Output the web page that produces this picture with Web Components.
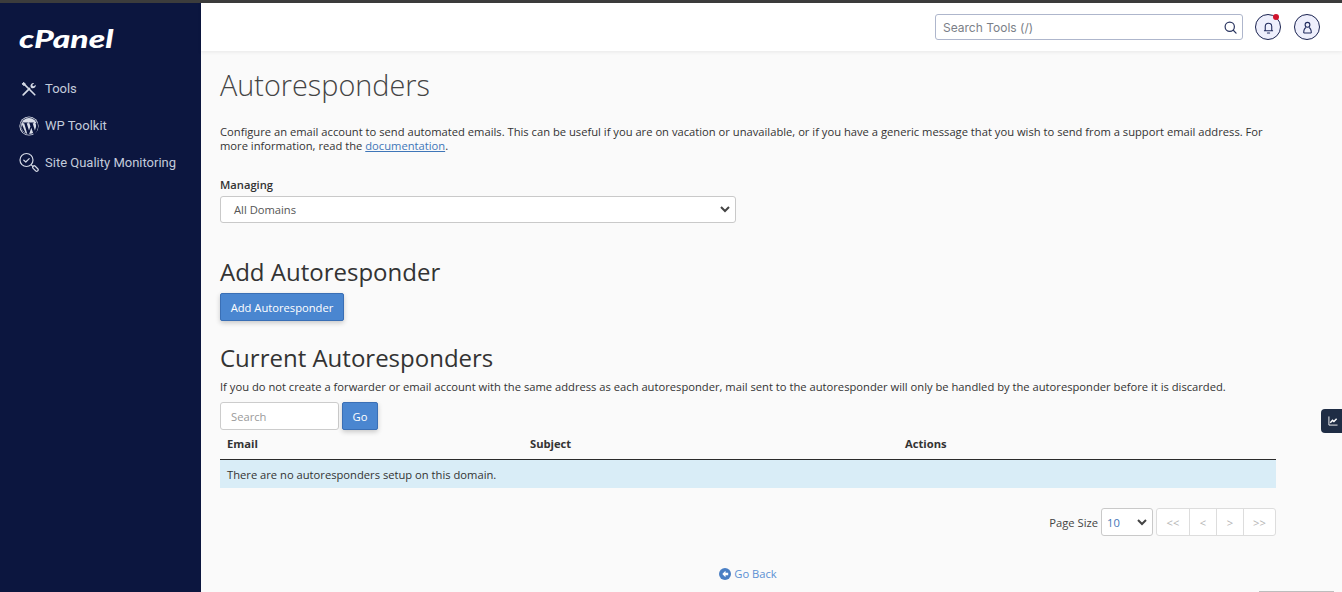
<!DOCTYPE html>
<html>
<head>
<meta charset="utf-8">
<title>Autoresponders</title>
<style>
html, body { margin: 0; height: 100%; overflow: hidden; }
body { background: #fafafa; font-family: "Open Sans", sans-serif; }
</style>
</head>
<body>
<cp-app></cp-app>
<script>
class CpNavItem extends HTMLElement {
    constructor() {
        super();
        this.attachShadow({ mode: "open" }).innerHTML = `
<style>
:host { display: flex; align-items: center; height: 37px; color: #c3cbdb; font: 13px Roboto, sans-serif; }
#icon { display: flex; justify-content: center; width: 20px; margin-right: 6px; }
</style>
<span id="icon"><slot name="icon"></slot></span><slot></slot>`;
    }
}
customElements.define("cp-nav-item", CpNavItem);

class CpSidebar extends HTMLElement {
    constructor() {
        super();
        this.attachShadow({ mode: "open" }).innerHTML = `
<style>
:host { display: block; flex: none; width: 201px; background: #0c163f; box-sizing: border-box; padding: 0 0 0 19px; }
#logo { height: 67px; padding-top: 19px; box-sizing: border-box; color: #fff; font: italic 900 24px/33px Lato, sans-serif; transform: scaleX(1.4); transform-origin: 0 0; }
nav { display: flex; flex-direction: column; }
</style>
<div id="logo">cPanel</div>
<nav>
<cp-nav-item>
<svg slot="icon" width="16" height="16" viewBox="0 0 18 18" fill="none" stroke="#d5dae6" stroke-linecap="round" stroke-linejoin="round"><path d="M3.500 3.500 15.500 15.500" stroke-width="1.800"/><path d="M1.500 3 3 1.500 5 3.500 3.500 5z" fill="#d5dae6"/><path d="M2.500 15.500 9.500 8.500" stroke-width="2"/><path d="M11 7c-.6-1.500-.3-2.800.5-3.700.9-.9 2-1.200 3.200-.9l-1.900 1.900.3 1.400 1.400.3L16.400 4.100c.3 1.200 0 2.400-.9 3.200-.9.900-2.300 1.100-3.700.5z" fill="#d5dae6" stroke="none"/></svg>
Tools</cp-nav-item>
<cp-nav-item>
<svg slot="icon" width="20" height="20" viewBox="0 0 20 20"><circle cx="10" cy="10" r="9.600" fill="#d9dde8"/><circle cx="10" cy="10" r="8.700" fill="#0c163f"/><circle cx="10" cy="10" r="8" fill="#d9dde8"/><path d="M3.500 6.500h5.400v.8H7.700L10 14.600l1.400-4.200-.9-3.100h-.9v-.8h5.200v.8h-1.100l2.200 7.100 1-3.200c.4-1.600.2-3-.6-4.200l1.800.2 1 3.200-1 4.500-2.200 3.100h-1.400l-2.200-6.300-2.100 6.300H8.300L5.200 7.300H3.900z" fill="#0c163f"/><path d="M3 8.600 6.600 17 4 15 2.400 11.500z" fill="#0c163f"/></svg>
WP Toolkit</cp-nav-item>
<cp-nav-item>
<svg slot="icon" width="20" height="21" viewBox="0 0 20 21" fill="none" stroke="#d5dae6" stroke-width="1.200" stroke-linecap="round" stroke-linejoin="round"><circle cx="7.500" cy="8" r="6.500"/><path d="M4.800 8.200l2 1.800 3.400-3.400"/><path d="M12.300 12.800l1.500 1.500"/><rect x="13.200" y="15" width="6.500" height="3" rx="1.500" transform="rotate(45 16.400 16.500)"/></svg>
Site Quality Monitoring</cp-nav-item>
</nav>`;
    }
}
customElements.define("cp-sidebar", CpSidebar);

class CpTopbar extends HTMLElement {
    constructor() {
        super();
        this.attachShadow({ mode: "open" }).innerHTML = `
<style>
:host { display: flex; flex: none; align-items: center; justify-content: flex-end; height: 48px; background: #fff; box-shadow: 0 1px 4px rgba(0,0,0,.08); padding-right: 22px; position: relative; }
#search { display: flex; align-items: center; justify-content: space-between; box-sizing: border-box; width: 308px; height: 26px; background: #fff; border: 1px solid #aeb6cc; border-radius: 3px; padding: 0 5px 0 7px; color: #7b7f88; font: 12px Inter, sans-serif; margin-right: 12px; }
.round { box-sizing: border-box; width: 26px; height: 26px; border: 1px solid #1a2350; border-radius: 50%; background: #eeeffc; display: flex; align-items: center; justify-content: center; position: relative; }
#bell { margin-right: 13px; }
#dot { position: absolute; top: -1px; right: 1px; width: 6px; height: 6px; border-radius: 50%; background: #d0142c; }
</style>
<div id="search">Search Tools (/)
<svg width="13" height="13" viewBox="0 0 14 14" fill="none" stroke="#2a3560" stroke-width="1.300" stroke-linecap="round"><circle cx="6.200" cy="6.200" r="5"/><path d="M10 10l3 3"/></svg></div>
<div class="round" id="bell">
<svg width="13" height="13" viewBox="0 0 12 12" fill="none" stroke="#1f2a5c" stroke-width="1"><path d="M3 8.500V5a3 3 0 0 1 6 0v3.500M1.800 9h8.400"/><path d="M5 11h2" stroke-linecap="round"/></svg>
<span id="dot"></span></div>
<div class="round">
<svg width="13" height="13" viewBox="0 0 12 12" fill="none" stroke="#1f2a5c" stroke-width="1"><circle cx="6" cy="3.500" r="2.200"/><path d="M2.500 11c0-2.500 1-4.500 2.200-5M9.500 11c0-2.500-1-4.500-2.200-5M2.500 11h7"/></svg></div>`;
    }
}
customElements.define("cp-topbar", CpTopbar);

class CpButton extends HTMLElement {
    constructor() {
        super();
        this.attachShadow({ mode: "open" }).innerHTML = `
<style>
:host { display: inline-flex; align-items: center; justify-content: center; box-sizing: border-box; background: #4a86d0; border: 1px solid #3a6fb5; border-radius: 2px; color: #fff; font: 11.200px "Open Sans", sans-serif; box-shadow: 0 2px 5px rgba(0,0,0,.2); }
</style>
<slot></slot>`;
    }
}
customElements.define("cp-button", CpButton);

class CpSelect extends HTMLElement {
    constructor() {
        super();
        this.attachShadow({ mode: "open" }).innerHTML = `
<style>
:host { display: flex; align-items: center; justify-content: space-between; box-sizing: border-box; background: #fff; border: 1px solid #c9c9c9; border-radius: 3px; color: var(--select-color, #555); font: 11.200px "Open Sans", sans-serif; }
svg { flex: none; }
</style>
<slot></slot>
<svg width="10" height="7" viewBox="0 0 10 7" fill="none" stroke="#444" stroke-width="2"><path d="M1 1l4 4 4-4"/></svg>`;
    }
}
customElements.define("cp-select", CpSelect);

class CpTable extends HTMLElement {
    constructor() {
        super();
        this.attachShadow({ mode: "open" }).innerHTML = `
<style>
:host { display: block; color: #333; font: 11.200px "Open Sans", sans-serif; }
#head { display: grid; grid-template-columns: 303px 375px 1fr; box-sizing: border-box; height: 30px; align-items: center; padding: 0 7px 3px; font-weight: 700; border-bottom: 1px solid #2b2b2b; }
#empty { box-sizing: border-box; height: 28px; background: #d9edf7; padding: 0 7px; display: flex; align-items: center; }
</style>
<div id="head"><span>Email</span><span>Subject</span><span>Actions</span></div>
<div id="empty">There are no autoresponders setup on this domain.</div>`;
    }
}
customElements.define("cp-table", CpTable);

class CpPager extends HTMLElement {
    constructor() {
        super();
        this.attachShadow({ mode: "open" }).innerHTML = `
<style>
:host { display: flex; justify-content: flex-end; align-items: center; height: 28px; margin-top: 20px; color: #444; font: 11.200px "Open Sans", sans-serif; }
cp-select { width: 52px; height: 28px; padding: 0 5px; margin: 0 3px; --select-color: #3f76b8; }
#pages { display: flex; height: 28px; box-sizing: border-box; border: 1px solid #ddd; border-radius: 3px; background: #fff; color: #b5b5b5; }
#pages span { display: flex; align-items: center; justify-content: center; border-left: 1px solid #ddd; }
#pages span:first-child { border-left: 0; }
</style>
<span>Page Size</span>
<cp-select>10</cp-select>
<div id="pages"><span style="width:32px">&lt;&lt;</span><span style="width:26px">&lt;</span><span style="width:26px">&gt;</span><span style="width:31px">&gt;&gt;</span></div>`;
    }
}
customElements.define("cp-pager", CpPager);

class CpApp extends HTMLElement {
    constructor() {
        super();
        this.attachShadow({ mode: "open" }).innerHTML = `
<style>
:host { display: flex; flex-direction: column; height: 592px; overflow: hidden; position: relative; }
#strip { flex: none; height: 3px; background: #3c3c3c; }
#body { display: flex; flex: 1; min-height: 0; }
#right { display: flex; flex-direction: column; flex: 1; min-width: 0; }
main { display: block; box-sizing: border-box; padding: 0 66px 0 19px; color: #333; font: 11.200px/15px "Open Sans", sans-serif; }
h1 { margin: 13px 0 0; font-weight: 300; font-size: 28.800px; line-height: 41px; color: #444; }
#intro { margin: 20px 0 0; line-height: 14px; }
#intro a { color: #3f76b8; }
label { display: block; margin-top: 24px; font-weight: 600; line-height: 16px; color: #333; }
#domains { margin-top: 3px; width: 516px; height: 27px; padding: 0 5px 0 13px; }
h2 { margin: 0; font-weight: 400; font-size: 24px; line-height: 32px; color: #333; }
#add-head { margin-top: 33px; }
#add { margin-top: 5px; width: 124px; height: 28px; }
#current-head { margin-top: 21px; }
#note { margin: 5px 0 0; line-height: 15px; }
#search { display: flex; margin-top: 8px; gap: 3px; }
#q { box-sizing: border-box; width: 119px; height: 28px; background: #fff; border: 1px solid #ccc; border-radius: 3px; padding: 0 10px; display: flex; align-items: center; color: #9a9a9a; }
#go { width: 36px; height: 28px; }
#back { display: flex; justify-content: center; align-items: center; gap: 3px; margin-top: 30px; color: #5a8fd3; }
#tab { position: absolute; right: 0; top: 409px; width: 21px; height: 24px; box-sizing: border-box; padding-left: 7px; background: #1f2d45; border-radius: 4px 0 0 4px; display: flex; align-items: center; }
#edge { position: absolute; left: 1259px; bottom: 0; width: 75px; height: 1px; background: #bdbdbd; }
</style>
<div id="strip"></div>
<div id="body">
<cp-sidebar></cp-sidebar>
<div id="right">
<cp-topbar></cp-topbar>
<main>
<h1>Autoresponders</h1>
<p id="intro">Configure an email account to send automated emails. This can be useful if you are on vacation or unavailable, or if you have a generic message that you wish to send from a support email address. For more information, read the <a href="#">documentation</a>.</p>
<label>Managing</label>
<cp-select id="domains">All Domains</cp-select>
<h2 id="add-head">Add Autoresponder</h2>
<cp-button id="add">Add Autoresponder</cp-button>
<h2 id="current-head">Current Autoresponders</h2>
<p id="note">If you do not create a forwarder or email account with the same address as each autoresponder, mail sent to the autoresponder will only be handled by the autoresponder before it is discarded.</p>
<div id="search"><div id="q">Search</div><cp-button id="go">Go</cp-button></div>
<cp-table></cp-table>
<cp-pager></cp-pager>
<div id="back">
<svg width="12" height="12" viewBox="0 0 12 12"><circle cx="6" cy="6" r="6" fill="#4a7fc4"/><path d="M6.500 2.800 3.300 6l3.200 3.200V7.200h2.700V4.800H6.500z" fill="#fff"/></svg>
Go Back</div>
</main>
</div>
</div>
<div id="tab"><svg width="10" height="10" viewBox="0 0 11 11" fill="none" stroke="#fff" stroke-width="1"><path d="M1 .500V10h9.500"/><path d="M2.500 7.500 5 4.800l1.500 1.200 3-3" stroke-width="1.600"/></svg></div>
<div id="edge"></div>`;
    }
}
customElements.define("cp-app", CpApp);
</script>
</body>
</html>
